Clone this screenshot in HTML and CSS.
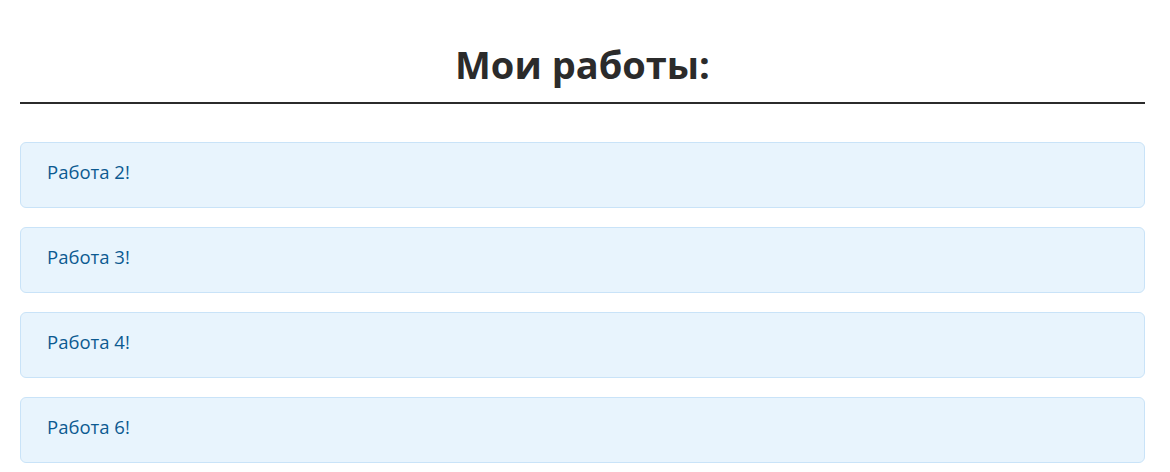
FILE: index.html
```html
<!DOCTYPE html>
<html lang="ru">
<head>
<meta charset="utf-8">
<title>Мои работы</title>
<link rel="stylesheet" href="styles.css">
</head>
<body>
<main class="page">
  <h1 class="title">Мои работы:</h1>
  <ul class="works">
    <li class="work">Работа 2!</li>
    <li class="work">Работа 3!</li>
    <li class="work">Работа 4!</li>
    <li class="work">Работа 6!</li>
  </ul>
</main>
</body>
</html>
```
FILE: styles.css
```css
html, body {
  margin: 0;
  padding: 0;
  background: #fff;
}
body {
  font-family: "Open Sans", "Noto Sans", sans-serif;
  color: #2b2b2b;
}
.page {
  padding: 0 25px 0 20px;
}
.title {
  margin: 0;
  padding-top: 38px;
  padding-bottom: 12px;
  font-size: 38px;
  line-height: 52px;
  font-weight: 700;
  text-align: center;
  color: #2b2b2b;
  border-bottom: 2px solid #2b2b2b;
}
.works {
  list-style: none;
  margin: 38px 0 0;
  padding: 0;
  display: flex;
  flex-direction: column;
  gap: 19px;
}
.work {
  background: #e8f4fd;
  border: 1px solid #c9e3f8;
  border-radius: 6px;
  padding: 17px 26px 23px;
  font-size: 18.5px;
  line-height: 24px;
  color: #0c5a91;
}
```
